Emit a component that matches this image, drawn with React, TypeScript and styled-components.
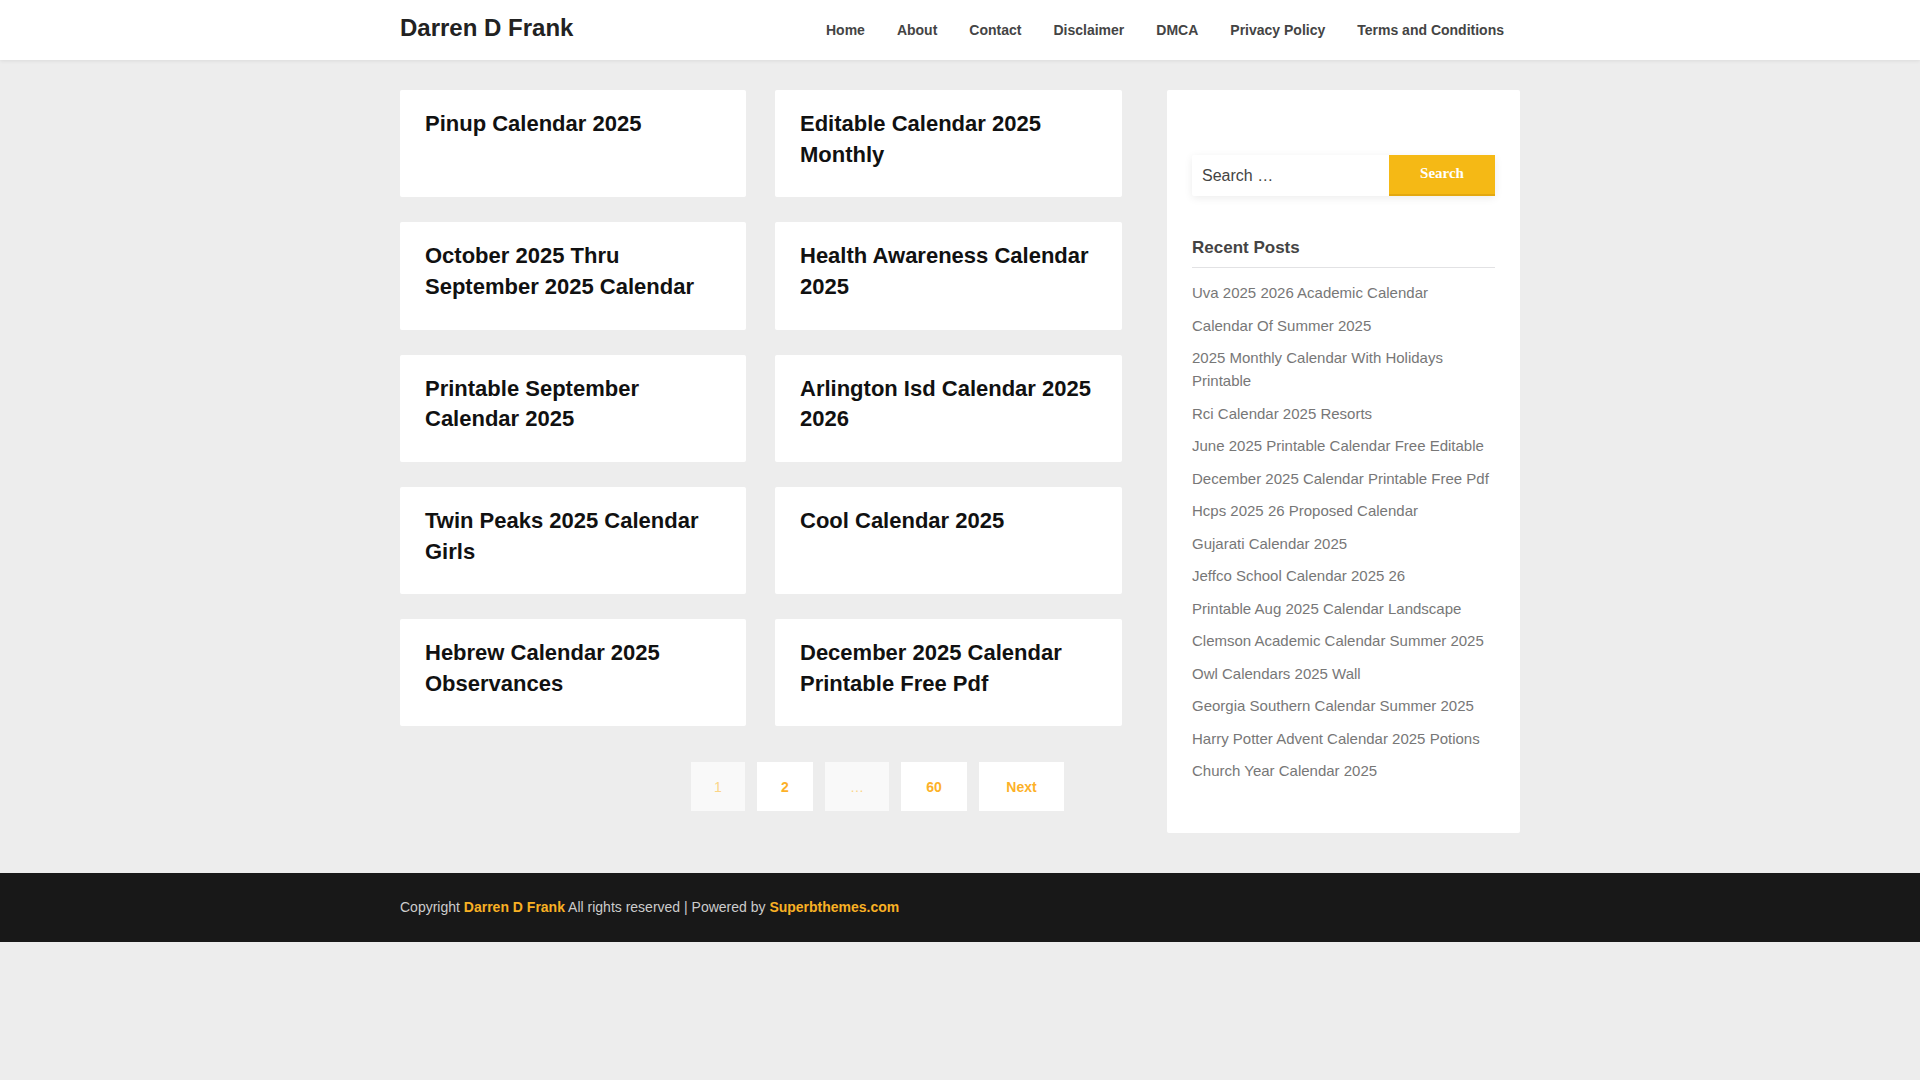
import React from "react";
import styled, { createGlobalStyle } from "styled-components";

const GlobalStyle = createGlobalStyle`
  body {
    margin: 0;
    min-height: 1080px;
    background: #ededed;
    font-family: "Liberation Sans", Arial, sans-serif;
    color: #444;
  }
  a { text-decoration: none; color: inherit; }
`;

const Header = styled.header`
  height: 60px;
  background: #fff;
  box-shadow: 0 1px 4px rgba(0, 0, 0, 0.08);
`;

const Wrap = styled.div`
  width: 1120px;
  margin: 0 auto;
`;

const HeaderRow = styled(Wrap)`
  display: flex;
  justify-content: space-between;
  align-items: center;
  height: 60px;
`;

const Logo = styled.a`
  font-size: 24px;
  font-weight: 700;
  color: #222;
  position: relative;
  top: -2px;
`;

const Nav = styled.nav`
  display: flex;
`;

const NavLink = styled.a`
  font-size: 14px;
  font-weight: 700;
  color: #444;
  padding: 0 16px;
`;

const Main = styled(Wrap)`
  display: flex;
  align-items: flex-start;
  padding-top: 30px;
`;

const Content = styled.div`
  width: 722px;
`;

const Grid = styled.div`
  display: grid;
  grid-template-columns: 346px 347px;
  column-gap: 29px;
  row-gap: 25px;
`;

const Card = styled.article`
  background: #fff;
  border-radius: 2px;
  padding: 19px 25px 26.7px;
`;

const CardTitle = styled.h2`
  margin: 0;
  font-size: 22px;
  line-height: 30.8px;
  font-weight: 700;
  color: #111;
`;

const Pagination = styled.div`
  display: flex;
  gap: 12px;
  padding: 36px 0 0 291px;
`;

const PageItem = styled.a<{ $muted?: boolean; $w: number }>`
  display: flex;
  align-items: center;
  justify-content: center;
  width: ${(p) => p.$w}px;
  height: 49px;
  font-size: 14px;
  background: ${(p) => (p.$muted ? "#f9f9f9" : "#fff")};
  color: ${(p) => (p.$muted ? "#fbd587" : "#fdb128")};
  font-weight: ${(p) => (p.$muted ? 400 : 700)};
`;

const Sidebar = styled.aside`
  width: 353px;
  height: 743px;
  margin-left: 45px;
  box-sizing: border-box;
  background: #fff;
  border-radius: 2px;
  padding: 65px 25px 0;
`;

const SearchForm = styled.div`
  display: flex;
  height: 41px;
  border-radius: 2px;
  box-shadow: 0 2px 8px rgba(0, 0, 0, 0.08);
`;

const SearchField = styled.div`
  flex: 1;
  display: flex;
  align-items: center;
  padding-left: 10px;
  font-size: 16px;
  color: #444;
`;

const SearchButton = styled.div`
  width: 106px;
  box-sizing: border-box;
  display: flex;
  align-items: center;
  justify-content: center;
  padding-bottom: 2px;
  background: #f5b915;
  border-bottom: 2px solid #e3a810;
  font-family: "Liberation Serif", serif;
  font-size: 15px;
  font-weight: 700;
  color: #fff;
`;

const WidgetTitle = styled.h3`
  margin: 41px 0 0;
  padding-bottom: 9px;
  border-bottom: 1px solid #e2e2e4;
  font-size: 17px;
  line-height: 21px;
  font-weight: 700;
  color: #444;
`;

const PostList = styled.ul`
  list-style: none;
  margin: 13px 0 0;
  padding: 0;
`;

const PostItem = styled.li`
  font-size: 15px;
  line-height: 23px;
  color: #777;
  margin-bottom: 9.5px;
`;

const Footer = styled.footer`
  margin-top: 40px;
  height: 69px;
  background: #181818;
`;

const FooterText = styled(Wrap)`
  display: block;
  line-height: 69px;
  font-size: 14px;
  color: #ccc;
`;

const FooterLink = styled.a`
  font-weight: 700;
  color: #f9b124;
`;

const titles = [
  "Pinup Calendar 2025",
  "Editable Calendar 2025 Monthly",
  "October 2025 Thru September 2025 Calendar",
  "Health Awareness Calendar 2025",
  "Printable September Calendar 2025",
  "Arlington Isd Calendar 2025 2026",
  "Twin Peaks 2025 Calendar Girls",
  "Cool Calendar 2025",
  "Hebrew Calendar 2025 Observances",
  "December 2025 Calendar Printable Free Pdf",
];

const recent = [
  "Uva 2025 2026 Academic Calendar",
  "Calendar Of Summer 2025",
  "2025 Monthly Calendar With Holidays Printable",
  "Rci Calendar 2025 Resorts",
  "June 2025 Printable Calendar Free Editable",
  "December 2025 Calendar Printable Free Pdf",
  "Hcps 2025 26 Proposed Calendar",
  "Gujarati Calendar 2025",
  "Jeffco School Calendar 2025 26",
  "Printable Aug 2025 Calendar Landscape",
  "Clemson Academic Calendar Summer 2025",
  "Owl Calendars 2025 Wall",
  "Georgia Southern Calendar Summer 2025",
  "Harry Potter Advent Calendar 2025 Potions",
  "Church Year Calendar 2025",
];

const navItems = ["Home", "About", "Contact", "Disclaimer", "DMCA", "Privacy Policy", "Terms and Conditions"];

const App = () => {
  return (
    <>
      <GlobalStyle />
      <Header>
        <HeaderRow>
          <Logo href="#">Darren D Frank</Logo>
          <Nav>
            {navItems.map((item) => (
              <NavLink href="#" key={item}>{item}</NavLink>
            ))}
          </Nav>
        </HeaderRow>
      </Header>
      <Main>
        <Content>
          <Grid>
            {titles.map((title) => (
              <Card key={title}>
                <CardTitle>{title}</CardTitle>
              </Card>
            ))}
          </Grid>
          <Pagination>
            <PageItem $muted $w={54}>1</PageItem>
            <PageItem $w={56}>2</PageItem>
            <PageItem $muted $w={64}>…</PageItem>
            <PageItem $w={66}>60</PageItem>
            <PageItem $w={85}>Next</PageItem>
          </Pagination>
        </Content>
        <Sidebar>
          <SearchForm>
            <SearchField>Search …</SearchField>
            <SearchButton>Search</SearchButton>
          </SearchForm>
          <WidgetTitle>Recent Posts</WidgetTitle>
          <PostList>
            {recent.map((post) => (
              <PostItem key={post}>{post}</PostItem>
            ))}
          </PostList>
        </Sidebar>
      </Main>
      <Footer>
        <FooterText>
          Copyright <FooterLink href="#">Darren D Frank</FooterLink> All rights reserved | Powered by{" "}
          <FooterLink href="#">Superbthemes.com</FooterLink>
        </FooterText>
      </Footer>
    </>
  );
};

export default App;
